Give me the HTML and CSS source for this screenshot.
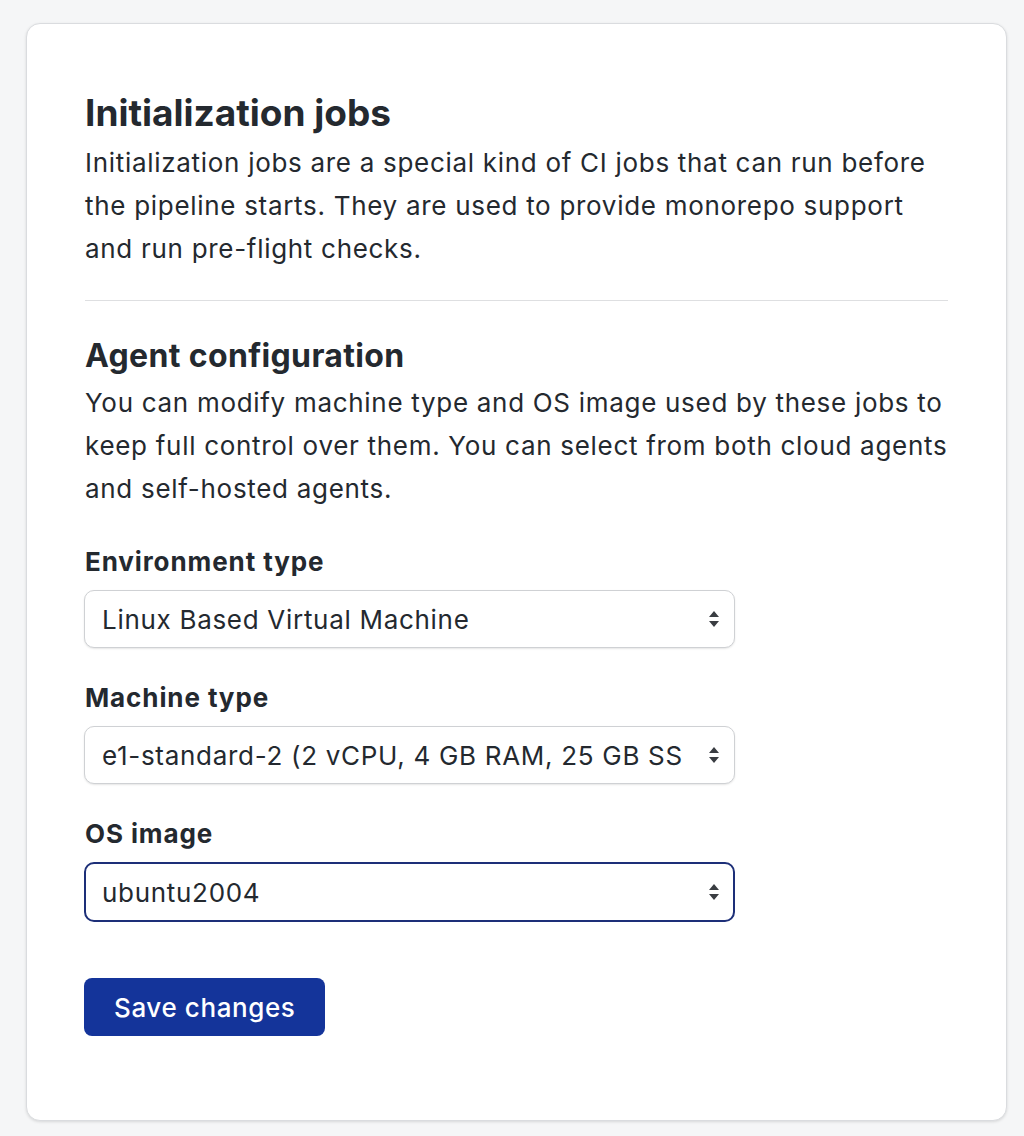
FILE: index.html
```html
<!DOCTYPE html>
<html lang="en">
<head>
<meta charset="utf-8">
<title>Initialization jobs</title>
<link rel="stylesheet" href="styles.css">
</head>
<body>
<div class="card">
  <h2 class="title">Initialization jobs</h2>
  <p class="desc">Initialization jobs are a special kind of CI jobs that can run before the pipeline starts. They are used to provide monorepo support and run pre-flight checks.</p>
  <hr class="divider">
  <h2 class="title title-second">Agent configuration</h2>
  <p class="desc">You can modify machine type and OS image used by these jobs to keep full control over them. You can select from both cloud agents and self-hosted agents.</p>

  <label class="label label-first">Environment type</label>
  <div class="select-wrap">
    <select class="select"><option>Linux Based Virtual Machine</option></select>
    <svg class="arrows" width="12" height="18" viewBox="0 0 12 18"><path d="M6 1 L11 7 H1 Z M6 17 L11 11 H1 Z" fill="#3a3d42"/></svg>
  </div>

  <label class="label">Machine type</label>
  <div class="select-wrap">
    <select class="select"><option>e1-standard-2 (2 vCPU, 4 GB RAM, 25 GB SSD)</option></select>
    <svg class="arrows" width="12" height="18" viewBox="0 0 12 18"><path d="M6 1 L11 7 H1 Z M6 17 L11 11 H1 Z" fill="#3a3d42"/></svg>
  </div>

  <label class="label">OS image</label>
  <div class="select-wrap">
    <select class="select select-focus"><option>ubuntu2004</option></select>
    <svg class="arrows" width="12" height="18" viewBox="0 0 12 18"><path d="M6 1 L11 7 H1 Z M6 17 L11 11 H1 Z" fill="#3a3d42"/></svg>
  </div>

  <button class="btn">Save changes</button>
</div>
</body>
</html>
```

FILE: styles.css
```css
html, body {
  margin: 0;
  padding: 0;
}
body {
  background: #f5f6f7;
  font-family: Inter, "Noto Sans", "Liberation Sans", sans-serif;
  color: #24292f;
  padding: 23px 17px 15px 26px;
}
.card {
  background: #ffffff;
  border: 1px solid #dadcdf;
  border-radius: 14px;
  box-shadow: 0 1px 3px rgba(0,0,0,0.12);
  padding: 67px 58px 84px 58px;
}
.title {
  font-size: 37px;
  line-height: 44px;
  font-weight: 700;
  margin: 0 0 6px 0;
  letter-spacing: 0;
}
.title-second {
  font-size: 32px;
  line-height: 38px;
  letter-spacing: 0.35px;
  margin-top: 36px;
  margin-bottom: 6px;
}
.desc {
  font-size: 26px;
  line-height: 43px;
  letter-spacing: 0.7px;
  margin: 0 -6px 0 0;
}
.divider {
  border: 0;
  border-top: 1px solid #dedfe1;
  margin: 30px 0 0 0;
}
.label {
  display: block;
  font-size: 26px;
  line-height: 38px;
  font-weight: 700;
  letter-spacing: 0.9px;
  margin: 31px 0 9px 0;
}
.label-first {
  margin-top: 33px;
}
.select-wrap {
  position: relative;
  width: 651px;
  margin-left: -1px;
}
.select {
  appearance: none;
  -webkit-appearance: none;
  display: block;
  width: 100%;
  height: 58px;
  border: 1px solid #cfd1d4;
  border-radius: 10px;
  background: #fff;
  box-shadow: 0 1px 2px rgba(0,0,0,0.1);
  font-family: inherit;
  font-size: 26px;
  letter-spacing: 0.7px;
  color: #24292f;
  padding: 0 52px 0 17px;
  margin: 0;
}
.select-focus {
  height: 60px;
  border: 2px solid #1d2f78;
  padding-left: 16px;
  box-shadow: none;
}
.arrows {
  position: absolute;
  right: 15px;
  top: 50%;
  transform: translateY(-50%);
  pointer-events: none;
}
.btn {
  display: block;
  margin-top: 56px;
  margin-left: -1px;
  height: 58px;
  padding: 0 30px;
  background: #14349a;
  color: #fff;
  border: 0;
  border-radius: 8px;
  font-family: inherit;
  font-size: 26px;
  font-weight: 500;
  letter-spacing: 0.6px;
}
```
